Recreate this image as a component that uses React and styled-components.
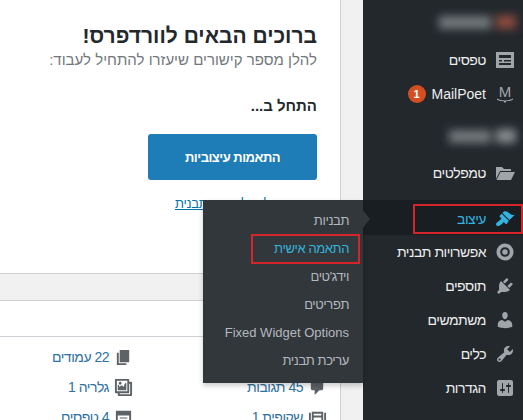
import React from "react";
import styled, { createGlobalStyle } from "styled-components";

const Global = createGlobalStyle`
  html, body { margin: 0; padding: 0; background: #f1f1f1; }
  body { font-family: "Liberation Sans", Arial, sans-serif; }
`;

const Screen = styled.div`
  position: relative;
  width: 523px;
  height: 420px;
  overflow: hidden;
  display: flex;
  background: #f1f1f1;
`;
const Content = styled.main`
  width: 363px;
  height: 420px;
  padding-right: 22px;
  box-sizing: border-box;
  direction: rtl;
`;
const Panel = styled.div`
  height: 420px;
  background: #fff;
  border-right: 1px solid #ccd0d4;
  display: flex;
  flex-direction: column;
`;
const Welcome = styled.section`
  flex: none;
  height: 274px;
  box-sizing: border-box;
  border-bottom: 1px solid #ccd0d4;
  padding: 23px 23px 0 0;
`;
const Title = styled.h2`
  margin: 0;
  font-size: 21px;
  line-height: 25px;
  font-weight: 700;
  color: #23282d;
`;
const About = styled.p`
  margin: 0;
  font-size: 15px;
  line-height: 23px;
  color: #72777c;
`;
const StartHeading = styled.h3`
  margin: 25px 0 0;
  font-size: 15px;
  line-height: 20px;
  font-weight: 700;
  color: #23282d;
`;
const PrimaryButton = styled.a`
  display: flex;
  align-items: center;
  justify-content: center;
  width: 169px;
  height: 46px;
  margin-top: 18px;
  border-radius: 3px;
  background: #1e7cb6;
  color: #fff;
  font-size: 13px;
  font-weight: 700;
  letter-spacing: -0.5px;
`;
const ThemeLink = styled.a`
  display: block;
  margin-top: 16px;
  margin-right: 10px;
  width: 132px;
  text-align: left;
  white-space: nowrap;
  font-size: 13px;
  line-height: 16px;
  letter-spacing: -0.3px;
  color: #0073aa;
  text-decoration: underline;
`;
const Strip = styled.div`
  flex: none;
  height: 26px;
  background: #f1f1f1;
  border-bottom: 1px solid #ccd0d4;
`;
const Blank = styled.div`
  flex: none;
  height: 35px;
  border-bottom: 1px solid #ccd0d4;
`;
const Glance = styled.ul`
  list-style: none;
  margin: 0;
  padding: 5px 13px 0 0;
  display: grid;
  grid-template-columns: 194px 120px;
  grid-auto-rows: 30px;
`;
const GlanceItem = styled.li`
  display: flex;
  align-items: center;
  gap: 5px;
  font-size: 14px;
  letter-spacing: -0.5px;
  white-space: nowrap;
  color: #30719e;
  svg { flex: none; width: 19px; height: 19px; fill: #5d6267; }
`;

const Sidebar = styled.nav`
  width: 160px;
  height: 420px;
  padding-top: 5px;
  box-sizing: border-box;
  background: #23282d;
  direction: rtl;
`;
const Row = styled.div`
  display: flex;
  align-items: center;
  gap: 9px;
  height: ${(p) => (p.$current ? 35 : 34)}px;
  box-sizing: border-box;
  margin-top: ${(p) => p.$top || 0}px;
  padding: ${(p) => (p.$current ? "3px" : "0")} 8px 0 0;
  background: ${(p) => (p.$current ? "#191e23" : "transparent")};
  color: ${(p) => (p.$current ? "#33b4e0" : "#eee")};
  font-size: 14px;
  letter-spacing: ${(p) => (p.$latin ? 0 : "-0.5px")};
  svg { flex: none; width: 20px; height: 20px; fill: ${(p) => (p.$current ? "#33b4e0" : "#a0a5aa")}; }
`;
const Badge = styled.span`
  width: 18px;
  height: 18px;
  margin-right: -3px;
  border-radius: 50%;
  background: #d54e21;
  color: #fff;
  font-size: 11px;
  font-weight: 700;
  display: flex;
  align-items: center;
  justify-content: center;
`;
const BlurRow = styled.div`
  display: flex;
  align-items: center;
  gap: 5px;
  height: 34px;
  margin-top: ${(p) => p.$top || 0}px;
  padding-right: 7px;
  filter: blur(4px);
`;
const BlurIcon = styled.span`
  width: 20px;
  height: 14px;
  background: ${(p) => p.$color};
`;
const BlurText = styled.span`
  width: ${(p) => p.$w}px;
  height: 13px;
  background: #73787c;
`;

const Flyout = styled.div`
  position: absolute;
  left: 203px;
  top: 200px;
  width: 160px;
  height: 183px;
  box-sizing: border-box;
  padding: 7px 14px 0 0;
  background: #32373c;
  box-shadow: 0 3px 5px rgba(0, 0, 0, 0.2);
  direction: rtl;
  &::after {
    content: "";
    position: absolute;
    left: 100%;
    top: 10px;
    border: 9px solid transparent;
    border-left: 7px solid #32373c;
    border-right: 0;
  }
`;
const FlyItem = styled.div`
  height: 28px;
  line-height: 28px;
  font-size: 13px;
  white-space: nowrap;
  letter-spacing: ${(p) => (p.$latin ? 0 : "-0.4px")};
  color: ${(p) => (p.$active ? "#33b4d9" : "#b4b9be")};
  font-weight: 400;
`;
const Annotation = styled.div`
  position: absolute;
  left: ${(p) => p.$x}px;
  top: ${(p) => p.$y}px;
  width: ${(p) => p.$w}px;
  height: ${(p) => p.$h}px;
  box-sizing: border-box;
  border: 2px solid #d5252b;
`;

const Icon = ({ d, rule }) => (
  <svg viewBox="0 0 20 20" aria-hidden="true"><path d={d} fillRule={rule} /></svg>
);
const P = {
  brush: "M14.48 11.06L7.41 3.99l1.5-1.5c.5-.56 2.3-.47 3.51.32 1.21.8 1.43 1.28 2.91 2.1 1.18.64 2.45 1.26 4.45.85zm-.71.71L6.7 4.7 4.93 6.47c-.39.39-.39 1.02 0 1.41l1.06 1.06c.39.39.39 1.03 0 1.42-.6.6-1.43 1.11-2.21 1.69-.35.26-.7.53-1.01.84C1.43 13.23.4 15.35 1.7 16.65c.22.22.53.35.84.35l.48-.01c.34-.04.72-.13 1.15-.32 1.25-.56 2.76-1.87 3.93-3.04.39-.39 1.02-.39 1.41 0l1.06 1.06c.39.39 1.03.39 1.42 0z",
  plug: "M13.11 4.36L9.87 7.6 8 5.73l3.24-3.24c.35-.34 1.05-.2 1.56.32.52.51.66 1.21.31 1.55zm-8 1.77l.91-1.12 9.01 9.01-1.19.84c-.71.71-2.63 1.16-3.82 1.16H6.14L4.9 17.26c-.59.59-1.54.59-2.12 0-.59-.58-.59-1.53 0-2.12l1.24-1.24v-3.88c0-1.13.4-3.19 1.09-3.89zm7.26 3.97l3.24-3.24c.34-.35 1.04-.21 1.55.31.52.51.66 1.21.31 1.55l-3.24 3.25z",
  user: "M10 9.25c-2.27 0-2.73-3.44-2.73-3.44C7 4.02 7.82 2 9.97 2c2.16 0 2.98 2.02 2.71 3.81 0 0-.41 3.44-2.68 3.44zm0 2.57L12.72 10c2.39 0 4.52 2.33 4.52 4.53v2.49s-3.65 1.13-7.24 1.13c-3.65 0-7.24-1.13-7.24-1.13v-2.49c0-2.25 1.94-4.48 4.47-4.48z",
  tools: "M16.68 9.77c-1.34 1.34-3.3 1.67-4.95.99l-5.41 6.52c-.99.99-2.59.99-3.58 0s-.99-2.59 0-3.57l6.52-5.42c-.68-1.65-.35-3.61.99-4.95 1.28-1.28 3.12-1.62 4.72-1.06l-2.89 2.89 2.82 2.82 2.86-2.87c.53 1.58.18 3.39-1.08 4.65zM3.81 16.21c.4.39 1.04.39 1.43 0 .4-.4.4-1.04 0-1.43-.39-.4-1.03-.4-1.43 0-.39.39-.39 1.03 0 1.43z",
  settings: "M18 16V4c0-1.1-.9-2-2-2H4c-1.1 0-2 .9-2 2v12c0 1.1.9 2 2 2h12c1.1 0 2-.9 2-2zM8 11h1c.55 0 1 .45 1 1s-.45 1-1 1H8v1.5c0 .28-.22.5-.5.5s-.5-.22-.5-.5V13H6c-.55 0-1-.45-1-1s.45-1 1-1h1V5.5c0-.28.22-.5.5-.5s.5.22.5.5V11zm5-2h-1c-.55 0-1-.45-1-1s.45-1 1-1h1V5.5c0-.28.22-.5.5-.5s.5.22.5.5V7h1c.55 0 1 .45 1 1s-.45 1-1 1h-1v5.5c0 .28-.22.5-.5.5s-.5-.22-.5-.5V9z",
  forms: "M1 2h18v16H1zM4 5v3h12V5zM4 10v1.5h3V10zM9 10v1.5h7V10zM4 13v2h12v-2z",
  folder: "M1 4h6l2 2h7v2H5L1 16zM5.5 9H20l-4 8H1.5z",
  ring: "M10 1.5a8.5 8.5 0 1 0 0 17 8.5 8.5 0 0 0 0-17zm0 3.7a4.8 4.8 0 1 1 0 9.6 4.8 4.8 0 0 1 0-9.6zm0 2.1a2.7 2.7 0 1 0 0 5.4 2.7 2.7 0 0 0 0-5.4z",
  pages: "M6 15V2h10v13H6zm-1 1h8v2H3V5h2v11z",
  comment: "M5 2h9c1.1 0 2 .9 2 2v7c0 1.1-.9 2-2 2h-2l-5 5v-5H5c-1.1 0-2-.9-2-2V4c0-1.1.9-2 2-2z",
  gallery: "M16 4h1.96c.57 0 1.04.47 1.04 1.04v12.92c0 .57-.47 1.04-1.04 1.04H5.04C4.47 19 4 18.53 4 17.96V16H2.04C1.47 16 1 15.53 1 14.96V2.04C1 1.47 1.47 1 2.04 1h12.92c.57 0 1.04.47 1.04 1.04V4zM3 14h11V3H3v11zm5-8.5C8 4.67 7.33 4 6.5 4S5 4.67 5 5.5 5.67 7 6.5 7 8 6.33 8 5.5zm2 4.5s1-5 3-5v8H4V7c2 0 2 3 2 3s.33-2 2-2 2 2 2 2zm7 7V6h-1v8.96c0 .57-.47 1.04-1.04 1.04H6v1h11z",
  slide: "M4 4h12v12H4zM6 6v2h8V6zM6 10v4h8v-4zM1 5h2v10H1zM17 5h2v10h-2z",
  formsSmall: "M2 3h16v14H2zM4 8v7h12V8zM6 10h8v1H6z",
};
const MailPoetIcon = () => (
  <svg viewBox="0 0 20 20" aria-hidden="true">
    <text x="10" y="13" textAnchor="middle" fontSize="15" fontFamily="Liberation Sans, sans-serif">M</text>
    <path d="M2 14.5c4 2.5 12 2.5 16 0v1.2c-2 1.2-5 1.6-7 1.6v1.2H9v-1.2c-2 0-5-.4-7-1.6z" />
  </svg>
);

const flyItems = ["תבניות", "התאמה אישית", "וידג'טים", "תפריטים", "Fixed Widget Options", "עריכת תבנית"];

export default function App() {
  return (
    <Screen>
      <Global />
      <Content>
        <Panel>
          <Welcome>
            <Title>ברוכים הבאים לוורדפרס!</Title>
            <About>להלן מספר קישורים שיעזרו להתחיל לעבוד:</About>
            <StartHeading>התחל ב...</StartHeading>
            <PrimaryButton>התאמות עיצוביות</PrimaryButton>
            <ThemeLink>או, להחליף את תבנית</ThemeLink>
          </Welcome>
          <Strip />
          <Blank />
          <Glance>
            <GlanceItem />
            <GlanceItem><Icon d={P.pages} /><span>22 עמודים</span></GlanceItem>
            <GlanceItem><Icon d={P.comment} /><span>45 תגובות</span></GlanceItem>
            <GlanceItem><Icon d={P.gallery} /><span>גלריה 1</span></GlanceItem>
            <GlanceItem><Icon d={P.slide} rule="evenodd" /><span>שקופית 1</span></GlanceItem>
            <GlanceItem><Icon d={P.formsSmall} rule="evenodd" /><span>4 טפסים</span></GlanceItem>
          </Glance>
        </Panel>
      </Content>
      <Sidebar>
        <BlurRow><BlurIcon $color="#8a4a3e" /><BlurText $w={52} /></BlurRow>
        <Row $top={4}><Icon d={P.forms} rule="evenodd" />טפסים</Row>
        <Row $latin><MailPoetIcon />MailPoet<Badge>1</Badge></Row>
        <BlurRow $top={8}><BlurIcon $color="#85898d" /><BlurText $w={42} /></BlurRow>
        <Row $top={3}><Icon d={P.folder} />טמפלטים</Row>
        <Row $top={10} $current><Icon d={P.brush} />עיצוב</Row>
        <Row><Icon d={P.ring} rule="evenodd" />אפשרויות תבנית</Row>
        <Row><Icon d={P.plug} />תוספים</Row>
        <Row><Icon d={P.user} />משתמשים</Row>
        <Row><Icon d={P.tools} />כלים</Row>
        <Row><Icon d={P.settings} />הגדרות</Row>
      </Sidebar>
      <Flyout>
        {flyItems.map((t, i) => (
          <FlyItem key={t} $active={i === 1} $latin={i === 4}>{t}</FlyItem>
        ))}
      </Flyout>
      <Annotation $x={251} $y={234} $w={109} $h={30} />
      <Annotation $x={413} $y={204} $w={110} $h={30} />
    </Screen>
  );
}
